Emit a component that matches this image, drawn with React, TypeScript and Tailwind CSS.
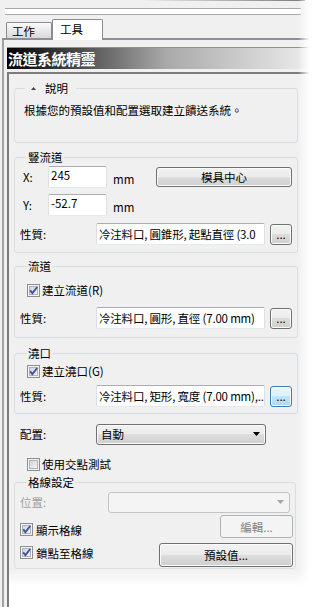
import React from "react";

const btn =
  "flex items-center justify-center border border-[#707070] rounded-[3px] bg-[linear-gradient(#f2f2f2,#ebebeb_50%,#dddddd_50%,#cfcfcf)] shadow-[inset_0_0_0_1px_#fbfbfb]";
const btnFocus =
  "flex items-center justify-center border border-[#3c7fb1] rounded-[3px] bg-[linear-gradient(#eaf6fd,#d9f0fc_50%,#bee6fd_50%,#a7d9f5)] shadow-[inset_0_0_0_1px_#f5fbfe]";
const input =
  "bg-white border border-[#abadb3] border-x-[#dbdfe6] border-b-[#e3e9ef] rounded-[2px] overflow-hidden whitespace-nowrap";

function Check({ checked }: { checked?: boolean }) {
  return (
    <svg width="13" height="13" viewBox="0 0 13 13" className="shrink-0 block">
      <defs>
        <linearGradient id="cbg" x1="0" y1="0" x2="1" y2="1">
          <stop offset="0" stopColor="#cdd1d6" />
          <stop offset="1" stopColor="#f6f6f6" />
        </linearGradient>
      </defs>
      <rect x="0.5" y="0.5" width="12" height="12" fill="#f3f3f3" stroke="#8f8f8f" />
      <rect x="2.5" y="2.5" width="8" height="8" fill="url(#cbg)" stroke="#b0b4ba" />
      {checked && (
        <path d="M3.2 6.4 L5.4 9.2 L10.2 3" fill="none" stroke="#3f55a3" strokeWidth="1.9" />
      )}
    </svg>
  );
}

function Arrow({ color = "#000" }: { color?: string }) {
  return (
    <svg width="7" height="4" viewBox="0 0 7 4" className="block">
      <path d="M0 0h7L3.5 4z" fill={color} />
    </svg>
  );
}

function Legend({ children }: { children: React.ReactNode }) {
  return <legend className="ml-[7px] px-[1px] leading-[14px]">{children}</legend>;
}

function PropRow({ text, focus, className }: { text: string; focus?: boolean; className: string }) {
  return (
    <div className={`flex items-center h-[24px] ${className}`}>
      <span className="w-[76px]">性質:</span>
      <div className={`${input} w-[169px] h-[22px] pl-[2px] pt-[3px] leading-[14px] tracking-[-0.2px]`}>{text}</div>
      <div className={`${focus ? btnFocus : btn} ml-[5px] w-[22px] h-[21px] leading-[14px] pb-[1px]`}>...</div>
    </div>
  );
}

export default function App() {
  return (
    <div className="relative w-[319px] h-[607px] overflow-hidden bg-[#f0f0f0] text-black text-[11.5px] leading-[14px] font-['Noto_Sans_CJK_TC',sans-serif] flex flex-col">
      {/* top edge and splitter */}
      <div className="h-[1px] ml-[140px] w-[165px] bg-gradient-to-r from-[#f0f0f0] to-[#7a7a7a] shrink-0" />
      <div className="mt-[7px] ml-[5px] w-[296px] h-[7px] border-y border-[#aaaaaa] bg-white shrink-0" />

      {/* tabs */}
      <div className="mt-[4px] flex items-end h-[21px] shrink-0">
        <div className="ml-[2px] w-[4px] h-full border-b-2 border-[#8c8e99]" />
        <div className="w-[46px] h-[18px] border border-b-2 border-[#898c95] border-b-[#8c8e99] rounded-t-[2px] bg-gradient-to-b from-[#fafafa] to-[#d9d9d9] pl-[5px] pt-[1px]">
          工作
        </div>
        <div className="w-[51px] h-[21px] border border-b-0 border-[#898c95] rounded-t-[2px] bg-white pl-[7px] pt-[2px]">
          工具
        </div>
        <div className="flex-1 h-full border-b-2 border-[#8c8e99]" />
      </div>

      {/* tab page */}
      <div className="ml-[2px] flex-1 flex flex-col border-l-2 border-[#a3a3a3]">
        <div className="mt-[7px] ml-[3px] h-[22px] border-t border-[#909090] bg-[linear-gradient(to_right,#000,#a9a9a9_51%,#f0f0f0)] pl-[1px] pt-[2px] text-white font-bold text-[15px] leading-[18px] tracking-[-0.5px] shrink-0">
          流道系統精靈
        </div>

        <div className="mt-[3px] ml-[3px] flex-1 border-l-2 border-t-2 border-[#7c7c7c] pl-[5px]">
          {/* 說明 */}
          <fieldset className="mt-[7px] w-[284px] h-[62px] border border-[#d5dfe5] rounded-[3px] px-[9px]">
            <legend className="ml-[1px] pl-[6px] pr-[8px] leading-[14px]">
              <span className="inline-block align-middle mb-[3px]">
                <svg width="5" height="3" viewBox="0 0 5 3" className="block">
                  <path d="M0 3h5L2.5 0z" fill="#444" />
                </svg>
              </span>
              <span className="ml-[9px]">說明</span>
            </legend>
            <p className="mt-[8px] whitespace-nowrap">根據您的預設值和配置選取建立饋送系統。</p>
          </fieldset>

          {/* 豎流道 */}
          <fieldset className="mt-[7px] w-[284px] h-[103px] border border-[#d5dfe5] rounded-[3px] pl-[5px]">
            <Legend>豎流道</Legend>
            <div className="mt-[1px] flex items-center h-[24px]">
              <span className="ml-[3px] w-[25px]">X:</span>
              <div className={`${input} w-[59px] h-[22px] pl-[2px] pt-[1px]`}>245</div>
              <span className="ml-[6px] w-[43px] mt-[3px]">mm</span>
              <div className={`${btn} w-[136px] h-[20px]`}>模具中心</div>
            </div>
            <div className="mt-[4px] flex items-center h-[24px]">
              <span className="ml-[3px] w-[25px]">Y:</span>
              <div className={`${input} w-[59px] h-[22px] pl-[2px] pt-[1px]`}>-52.7</div>
              <span className="ml-[6px] w-[43px] mt-[3px]">mm</span>
            </div>
            <PropRow className="mt-[5px]" text="冷注料口, 圓錐形, 起點直徑 (3.0" />
          </fieldset>

          {/* 流道 */}
          <fieldset className="mt-[6px] w-[284px] h-[79px] border border-[#d5dfe5] rounded-[3px] pl-[5px]">
            <Legend>流道</Legend>
            <div className="mt-[9px] ml-[7px] flex items-center gap-[2px] h-[16px]">
              <Check checked />
              <span>建立流道(R)</span>
            </div>
            <PropRow className="mt-[8px]" text="冷注料口, 圓形, 直徑 (7.00 mm)" />
          </fieldset>

          {/* 澆口 */}
          <fieldset className="mt-[8px] w-[284px] h-[68px] border border-[#d5dfe5] rounded-[3px] pl-[5px]">
            <Legend>澆口</Legend>
            <div className="mt-[3px] ml-[7px] flex items-center gap-[2px] h-[16px]">
              <Check checked />
              <span>建立澆口(G)</span>
            </div>
            <PropRow className="mt-[5px]" focus text="冷注料口, 矩形, 寬度 (7.00 mm),.." />
          </fieldset>

          {/* 配置 */}
          <div className="mt-[9px] ml-[6px] flex items-center h-[22px]">
            <span className="w-[76px]">配置:</span>
            <div className={`${btn} !justify-between w-[170px] h-[21px] pl-[4px] pr-[5px]`}>
              <span>自動</span>
              <Arrow />
            </div>
          </div>

          <div className="mt-[11px] ml-[13px] flex items-center gap-[2px] h-[16px]">
            <Check />
            <span>使用交點測試</span>
          </div>

          {/* 格線設定 */}
          <fieldset className="mt-[3px] w-[282px] h-[94px] border border-[#d5dfe5] rounded-[3px] pl-[5px]">
            <Legend>格線設定</Legend>
            <div className="mt-[2px] flex items-center h-[22px]">
              <span className="w-[88px] text-[#a0a0a0]">位置:</span>
              <div className="flex items-center justify-end w-[182px] h-[21px] border border-[#c2c4c7] rounded-[3px] bg-[#f4f4f4] pr-[5px]">
                <Arrow color="#a6a6a6" />
              </div>
            </div>
            <div className="mt-[2px] flex items-start h-[24px]">
              <div className="mt-[6px] flex items-center gap-[3px] h-[17px]">
                <Check checked />
                <span>顯示格線</span>
              </div>
              <div className="ml-auto mr-[2px] flex items-center justify-center w-[73px] h-[23px] border border-[#adb2b5] rounded-[3px] bg-[#f4f4f4] text-[#838383]">
                編輯...
              </div>
            </div>
            <div className="mt-[4px] flex items-start h-[24px]">
              <div className="mt-[1px] flex items-center gap-[3px] h-[17px]">
                <Check checked />
                <span>鎖點至格線</span>
              </div>
              <div className={`${btn} ml-auto mr-[2px] w-[134px] h-[24px]`}>預設值...</div>
            </div>
          </fieldset>
        </div>
      </div>

      {/* soft edge fade, right and bottom */}
      <div className="absolute top-0 bottom-0 left-[298px] w-[21px] bg-[linear-gradient(to_right,rgba(255,255,255,0),#fff_55%)]" />
      <div className="absolute left-[9px] right-0 top-[569px] bottom-0 bg-[linear-gradient(rgba(255,255,255,0),#fff_45%)]" />
    </div>
  );
}
